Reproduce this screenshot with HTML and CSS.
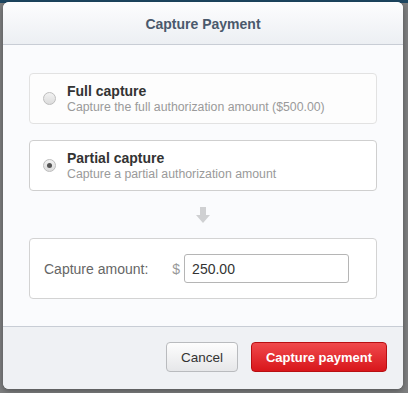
FILE: index.html
```html
<!DOCTYPE html>
<html lang="en">
<head>
  <meta charset="UTF-8" />
  <title>Capture Payment</title>
  <link rel="stylesheet" href="styles.css">
</head>
<body>
  <div class="topbar"></div>
  <div class="modal">
    <div class="modal-header">Capture Payment</div>
    <div class="modal-body">
      <label class="option">
        <span class="radio"></span>
        <span class="option-text">
          <b>Full capture</b>
          <small>Capture the full authorization amount ($500.00)</small>
        </span>
      </label>
      <label class="option selected">
        <span class="radio"><i></i></span>
        <span class="option-text">
          <b>Partial capture</b>
          <small>Capture a partial authorization amount</small>
        </span>
      </label>
      <div class="arrow">
        <svg width="14" height="16" viewBox="0 0 14 16"><path d="M4 0h6v8h4l-7 8-7-8h4z" fill="#cfd0d2"/></svg>
      </div>
      <div class="amount-box">
        <span class="amount-label">Capture amount:</span>
        <span class="currency">$</span>
        <input class="amount-input" type="text" value="250.00">
      </div>
    </div>
    <div class="modal-footer">
      <button class="btn">Cancel</button>
      <button class="btn btn-red">Capture payment</button>
    </div>
  </div>
</body>
</html>
```

FILE: styles.css
```css
body {
  margin: 0;
  background: #7e7f80;
  font-family: "Liberation Sans", Arial, sans-serif;
  height: 393px;
  overflow: hidden;
}
.topbar {
  height: 3px;
  background: #1e4762;
  margin-bottom: -1px;
}
.modal {
  margin-left: 3px;
  width: 400px;
  height: 387px;
  background: #fafbfd;
  border-radius: 6px;
  box-shadow: 0 2px 6px rgba(0,0,0,0.35);
  display: flex;
  flex-direction: column;
  overflow: hidden;
  position: relative;
}
.modal-header {
  height: 42px;
  line-height: 44px;
  flex-shrink: 0;
  text-align: center;
  font-weight: bold;
  font-size: 14px;
  color: #4a596c;
  background: linear-gradient(#fdfdfe, #eceff3);
  border-bottom: 1px solid #c8cdd5;
}
.modal-body {
  flex: 1;
  padding: 28px 26px 0 26px;
}
.option {
  display: flex;
  align-items: center;
  height: 49px;
  background: #fdfdfd;
  border: 1px solid #e2e2e2;
  border-radius: 4px;
  margin-bottom: 16px;
}
.option.selected {
  background: #fff;
  border-color: #cfcfcf;
}
.radio {
  width: 11px;
  height: 11px;
  margin: 0 11px 0 13px;
  border-radius: 50%;
  border: 1px solid #bdbdbd;
  background: linear-gradient(#f2f2f2, #dcdcdc);
  display: flex;
  align-items: center;
  justify-content: center;
}
.radio i {
  width: 5px;
  height: 5px;
  border-radius: 50%;
  background: #555;
}
.option-text {
  display: flex;
  flex-direction: column;
}
.option-text b {
  font-size: 14px;
  color: #333;
  line-height: 17px;
}
.option-text small {
  font-size: 12.3px;
  color: #9a9a9a;
  line-height: 15px;
}
.arrow {
  display: flex;
  justify-content: center;
  height: 16px;
  margin-bottom: 15px;
}
.amount-box {
  display: flex;
  align-items: center;
  height: 59px;
  background: #fff;
  border: 1px solid #d3d3d3;
  border-radius: 4px;
}
.amount-label {
  font-size: 14px;
  color: #666;
  margin-left: 14px;
}
.currency {
  font-size: 14px;
  color: #999;
  margin-left: 24px;
  margin-right: 4px;
}
.amount-input {
  width: 156px;
  height: 27px;
  box-sizing: content-box;
  padding: 0 0 0 7px;
  border: 1px solid #b5b5b5;
  border-radius: 3px;
  font-family: "Liberation Sans", Arial, sans-serif;
  font-size: 14px;
  color: #333;
  outline: none;
}
.modal-footer {
  height: 63px;
  flex-shrink: 0;
  border-top: 1px solid #c8cdd5;
  background: #eff1f4;
  display: flex;
  justify-content: flex-end;
  align-items: flex-start;
  gap: 13px;
  padding: 15px 16px 0 0;
  box-sizing: border-box;
}
.btn {
  width: 72px;
  height: 30px;
  padding: 0;
  font-family: "Liberation Sans", Arial, sans-serif;
  font-size: 13.5px;
  color: #333;
  background: linear-gradient(#fdfdfd, #e6e7e9);
  border: 1px solid #b9bbbe;
  border-radius: 4px;
}
.btn-red {
  width: 136px;
  color: #fff;
  font-weight: bold;
  font-size: 13px;
  background: linear-gradient(#f04a4c, #d8161b);
  border-color: #b80f12;
}
```
